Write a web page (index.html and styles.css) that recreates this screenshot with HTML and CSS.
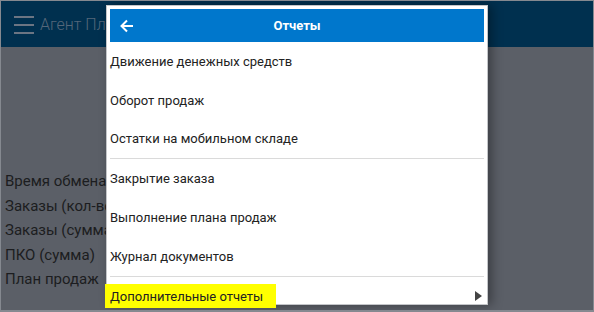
FILE: index.html
```html
<!DOCTYPE html>
<html lang="ru">
<head>
<meta charset="utf-8">
<link rel="stylesheet" href="styles.css">
</head>
<body>
<div class="screen">
  <header class="appbar">
    <span class="burger"><i></i><i></i><i></i></span>
    <span class="apptitle">Агент Плюс</span>
  </header>
  <main class="content">
    <div class="stat">Время обмена</div>
    <div class="stat">Заказы (кол-во)</div>
    <div class="stat">Заказы (сумма)</div>
    <div class="stat">ПКО (сумма)</div>
    <div class="stat">План продаж</div>
  </main>
  <div class="dialog">
    <div class="dlg-head">
      <svg class="back" width="14" height="14" viewBox="0 0 14 14"><path d="M13 7H2M7 1.5L1.5 7L7 12.5" fill="none" stroke="#fff" stroke-width="2"/></svg>
      <span class="dlg-title">Отчеты</span>
    </div>
    <div class="item">Движение денежных средств</div>
    <div class="item short">Оборот продаж</div>
    <div class="item">Остатки на мобильном складе</div>
    <div class="sep"></div>
    <div class="item">Закрытие заказа</div>
    <div class="item">Выполнение плана продаж</div>
    <div class="item">Журнал документов</div>
    <div class="sep"></div>
    <div class="item last"><span class="mark"></span><span class="label">Дополнительные отчеты</span><span class="tri"></span></div>
  </div>
</div>
</body>
</html>
```
FILE: styles.css
```css
html, body { margin: 0; padding: 0; }
body { width: 594px; height: 312px; overflow: hidden; font-family: Roboto, "Noto Sans", sans-serif; }
.screen {
  position: relative;
  box-sizing: border-box;
  width: 594px; height: 312px;
  border: 1px solid #858990;
  border-bottom-width: 2px;
  background: #5b5f67;
  overflow: hidden;
}
.appbar {
  height: 46px;
  background: #00304f;
  display: flex;
  align-items: center;
  padding-left: 13px;
  gap: 6px;
}
.burger { display: flex; flex-direction: column; gap: 6px; width: 20px; padding-top: 1px; }
.burger i { display: block; height: 2px; background: #6b7583; }
.apptitle { color: #55677a; font-size: 16px; font-weight: 300; }
.content { padding: 122px 0 0 4px; }
.stat { color: #1c1d20; font-size: 15px; height: 24.6px; line-height: 24px; white-space: nowrap; }
.dialog {
  position: absolute;
  left: 105px; top: 4px;
  width: 374px;
  height: 292px;
  background: #fff;
  border: 1px solid #c4c6c9;
  padding: 3px;
  box-shadow: 4px 0 10px rgba(0,0,0,0.35);
  overflow: visible;
}
.dlg-head {
  height: 33px;
  background: #0077cc;
  display: flex; align-items: center; justify-content: center;
  position: relative;
}
.back { position: absolute; left: 10px; top: 10px; }
.dlg-title { color: #fff; font-weight: 700; font-size: 13px; }
.item {
  height: 39px;
  display: flex; align-items: center;
  color: #222;
  font-size: 13px;
  position: relative;
}
.item.short { height: 38px; }
.sep { height: 1px; background: #dadada; }
.item.last { height: 24px; margin-top: 7px; }
.mark {
  position: absolute; left: -5px; top: 0;
  width: 171px; height: 24px;
  background: #ffff00;
}
.label { position: relative; }
.tri {
  position: absolute; right: 2px; top: 7px;
  width: 0; height: 0;
  border-top: 5px solid transparent;
  border-bottom: 5px solid transparent;
  border-left: 7px solid #444;
}
```
